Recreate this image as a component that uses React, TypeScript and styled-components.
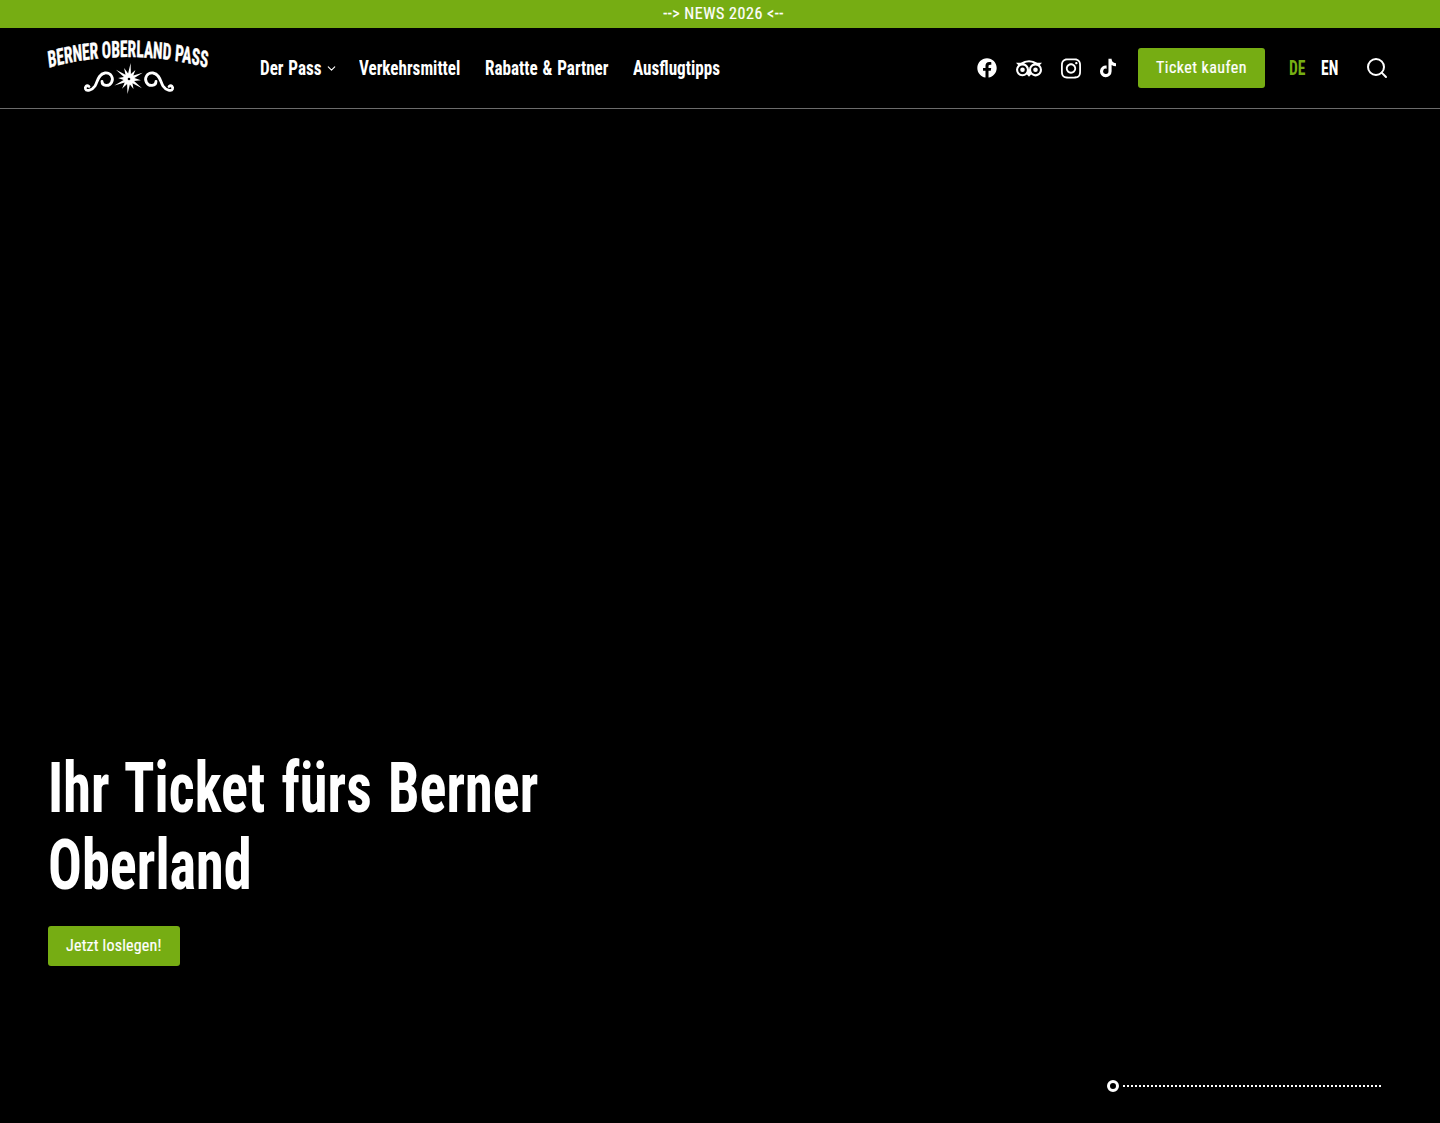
import React from "react";
import styled, { createGlobalStyle } from "styled-components";
import { FaFacebook, FaInstagram, FaTiktok, FaTripadvisor } from "react-icons/fa";
import { ChevronDown, Search } from "lucide-react";

const GREEN = "#76ad13";
const Narrow = `"Roboto Condensed", "Liberation Sans Narrow", "Liberation Sans", sans-serif`;

const Global = createGlobalStyle`
  html, body { margin: 0; padding: 0; background: #000; }
  body { font-family: ${Narrow}; color: #fff; }
  a { color: inherit; text-decoration: none; }
`;

const Page = styled.div`
  width: 1440px;
  height: 1123px;
  display: flex;
  flex-direction: column;
  overflow: hidden;
  background: #000;
`;

const Announce = styled.a`
  height: 28px;
  flex: none;
  display: flex;
  align-items: center;
  justify-content: center;
  padding-left: 7px;
  background: ${GREEN};
  font-size: 16px;
  line-height: 28px;
  letter-spacing: 0.55px;
  -webkit-text-stroke: 0.2px #fff;
`;

const Header = styled.header`
  height: 80px;
  flex: none;
  display: flex;
  align-items: center;
  padding: 0 48px;
  border-bottom: 1px solid #6b6b6b;
`;

const LogoLink = styled.a`
  display: block;
  width: 160px;
  height: 56px;
  flex: none;
  margin-right: 52px;
`;

const LogoSvg = styled.svg`
  display: block;
  overflow: visible;
`;

const Nav = styled.nav`
  display: flex;
  align-items: center;
  gap: 24px;
`;

const NavItem = styled.a`
  display: flex;
  align-items: center;
  font-size: 20px;
  font-weight: 700;
  white-space: nowrap;
`;

const NarrowLabel = styled.span<{ $w: number }>`
  display: inline-block;
  width: ${(p) => p.$w}px;
  white-space: nowrap;
  word-spacing: 1px;
  transform: scaleX(0.855);
  transform-origin: left center;
`;

const NavChevron = styled(ChevronDown)`
  margin: 0 -3px 0 4px;
`;

const Actions = styled.div`
  margin-left: auto;
  display: flex;
  align-items: center;
`;

const Socials = styled.div`
  display: flex;
  align-items: center;
  gap: 19px;
  margin-right: 22px;
`;

const Social = styled.a<{ $w: number }>`
  display: flex;
  align-items: center;
  justify-content: center;
  width: ${(p) => p.$w}px;
`;

const Button = styled.a<{ $tracking: number }>`
  display: flex;
  align-items: center;
  justify-content: center;
  height: 40px;
  box-sizing: border-box;
  padding: 0 18px 2px;
  background: ${GREEN};
  border-radius: 3px;
  font-size: 16px;
  letter-spacing: ${(p) => p.$tracking}px;
  -webkit-text-stroke: 0.2px #fff;
  white-space: nowrap;
`;

const Langs = styled.div`
  display: flex;
  gap: 16px;
  margin: 0 28px 0 24px;
`;

const Lang = styled.a<{ $active?: boolean }>`
  display: inline-block;
  width: 16px;
  font-size: 20px;
  font-weight: 700;
  white-space: nowrap;
  transform: scaleX(0.78);
  transform-origin: left center;
  color: ${(p) => (p.$active ? GREEN : "#fff")};
`;

const SearchButton = styled.a`
  display: flex;
  margin-right: 3px;
`;

const Hero = styled.main`
  flex: 1;
  display: flex;
  flex-direction: column;
  justify-content: flex-end;
  padding: 0 48px;
`;

const Title = styled.h1`
  margin: 0 0 22px;
  width: 630px;
  font-size: 70px;
  line-height: 77px;
  font-weight: 700;
  word-spacing: 4px;
  transform: scaleX(0.804);
  transform-origin: left center;
`;

const HeroActions = styled.div`
  display: flex;
`;

const Slider = styled.div`
  display: flex;
  align-items: center;
  align-self: flex-end;
  width: 274px;
  margin: 114px 11px 31px 0;
`;

const Knob = styled.span`
  width: 12px;
  height: 12px;
  box-sizing: border-box;
  border: 3px solid #fff;
  border-radius: 50%;
  flex: none;
`;

const Track = styled.span`
  flex: 1;
  height: 2px;
  margin-left: 4px;
  background: repeating-linear-gradient(to right, #fff 0 2px, transparent 2px 4px);
`;

const starLengths = [16, 11, 15, 12, 16, 11, 15, 12, 16, 11, 16, 12];
const starPoints = starLengths
  .flatMap((r, i) => {
    const a = (i / starLengths.length) * Math.PI * 2 - Math.PI / 2 + 0.1;
    const b = a + Math.PI / starLengths.length;
    return [
      `${(81 + r * Math.cos(a)).toFixed(1)},${(39 + r * Math.sin(a)).toFixed(1)}`,
      `${(81 + 5.5 * Math.cos(b)).toFixed(1)},${(39 + 5.5 * Math.sin(b)).toFixed(1)}`,
    ];
  })
  .join(" ");

const scrollPath =
  "M41 46.5 C38.5 44.5 36.8 47 37.5 49 C38.5 51.5 44 50.5 47 46 C49.5 42 50 34 57 33 C63 32.5 66 38 63.5 42.5 C61 47 54 46 54 41.5";

const Logo = () => (
  <LogoSvg viewBox="0 0 160 56" width="160" height="56" fill="#fff">
    <defs>
      <path id="logoArc" d="M-36 35.6 Q119.4 -1.6 275 35.6" />
    </defs>
    <g transform="scale(0.67 1)">
      <text fontFamily={Narrow} fontWeight="700" fontSize="23" textAnchor="middle" stroke="#fff" strokeWidth="0.4">
        <textPath href="#logoArc" startOffset="50%">BERNER OBERLAND PASS</textPath>
      </text>
    </g>
    <polygon points={starPoints} />
    <circle cx="81" cy="39" r="1.3" fill="#000" />
    <g fill="none" stroke="#fff" strokeWidth="2.8" strokeLinecap="round">
      <path d={scrollPath} />
      <path transform="translate(162 0) scale(-1 1)" d={scrollPath} />
    </g>
  </LogoSvg>
);

export default function App() {
  return (
    <Page>
      <Global />
      <Announce href="#">--&gt; NEWS 2026 &lt;--</Announce>
      <Header>
        <LogoLink href="#" aria-label="Berner Oberland Pass">
          <Logo />
        </LogoLink>
        <Nav>
          <NavItem href="#">
            <NarrowLabel $w={61}>Der Pass</NarrowLabel>
            <NavChevron size={13} strokeWidth={2} />
          </NavItem>
          <NavItem href="#"><NarrowLabel $w={102}>Verkehrsmittel</NarrowLabel></NavItem>
          <NavItem href="#"><NarrowLabel $w={124}>Rabatte &amp; Partner</NarrowLabel></NavItem>
          <NavItem href="#"><NarrowLabel $w={88}>Ausflugtipps</NarrowLabel></NavItem>
        </Nav>
        <Actions>
          <Socials>
            <Social href="#" $w={20}><FaFacebook size={20} /></Social>
            <Social href="#" $w={26}><FaTripadvisor size={27} /></Social>
            <Social href="#" $w={20}><FaInstagram size={23} /></Social>
            <Social href="#" $w={16}><FaTiktok size={22} /></Social>
          </Socials>
          <Button href="#" $tracking={0.45}>Ticket kaufen</Button>
          <Langs>
            <Lang href="#" $active>DE</Lang>
            <Lang href="#">EN</Lang>
          </Langs>
          <SearchButton href="#"><Search size={24} strokeWidth={2} /></SearchButton>
        </Actions>
      </Header>
      <Hero>
        <Title>Ihr Ticket fürs Berner Oberland</Title>
        <HeroActions>
          <Button href="#" $tracking={0.2}>Jetzt loslegen!</Button>
        </HeroActions>
        <Slider>
          <Knob />
          <Track />
        </Slider>
      </Hero>
    </Page>
  );
}
